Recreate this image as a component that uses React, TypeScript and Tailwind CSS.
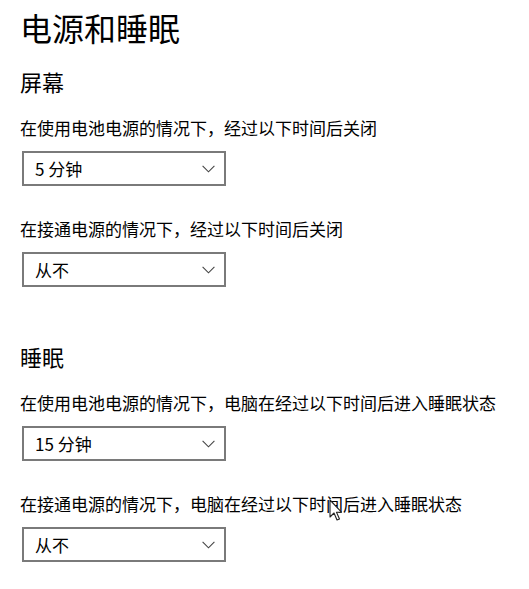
const font = {
  fontFamily: '"Noto Sans CJK SC", "Noto Sans", sans-serif',
};

type Setting = { label: string; value: string };

const screenSettings: Setting[] = [
  { label: "在使用电池电源的情况下，经过以下时间后关闭", value: "5 分钟" },
  { label: "在接通电源的情况下，经过以下时间后关闭", value: "从不" },
];

const sleepSettings: Setting[] = [
  {
    label: "在使用电池电源的情况下，电脑在经过以下时间后进入睡眠状态",
    value: "15 分钟",
  },
  {
    label: "在接通电源的情况下，电脑在经过以下时间后进入睡眠状态",
    value: "从不",
  },
];

function Chevron() {
  return (
    <svg width="13" height="8" viewBox="0 0 13 8" className="shrink-0">
      <path
        d="M0.6 0.8 L6.5 6.8 L12.4 0.8"
        fill="none"
        stroke="#444"
        strokeWidth="1.1"
      />
    </svg>
  );
}

function Dropdown({ value }: { value: string }) {
  return (
    <div className="mt-[11px] ml-[2px] flex h-[35px] w-[204px] items-center justify-between border-2 border-[#7a7a7a] bg-white pl-[11px] pr-[9px]">
      <span className="text-[17px] leading-none text-black">{value}</span>
      <Chevron />
    </div>
  );
}

function SettingRow({ setting, first }: { setting: Setting; first: boolean }) {
  return (
    <div className={first ? "mt-[20px]" : "mt-[31px]"}>
      <p className="text-[17px] leading-[24px] text-black whitespace-nowrap">
        {setting.label}
      </p>
      <Dropdown value={setting.value} />
    </div>
  );
}

function Cursor() {
  return (
    <svg
      className="absolute left-[329px] top-[499px]"
      width="14"
      height="24"
      viewBox="0 0 14 24"
    >
      <path
        d="M1 1 L1 18 L5 14 L8 21 L10.5 20 L7.5 13.2 L12.5 13.2 Z"
        fill="#fff"
        stroke="#222"
        strokeWidth="1.1"
        strokeLinejoin="round"
      />
    </svg>
  );
}

export default function App() {
  return (
    <div
      className="relative h-[589px] w-[529px] overflow-hidden bg-white pl-[20px] pt-[7px] text-black"
      style={font}
    >
      <h1 className="text-[32px] leading-[40px] font-normal">电源和睡眠</h1>

      <section className="mt-[19px]">
        <h2 className="text-[22px] leading-[30px] font-normal">屏幕</h2>
        {screenSettings.map((s, i) => (
          <SettingRow key={s.label} setting={s} first={i === 0} />
        ))}
      </section>

      <section className="mt-[54px]">
        <h2 className="text-[22px] leading-[30px] font-normal">睡眠</h2>
        {sleepSettings.map((s, i) => (
          <SettingRow key={s.label} setting={s} first={i === 0} />
        ))}
      </section>

      <Cursor />
    </div>
  );
}
